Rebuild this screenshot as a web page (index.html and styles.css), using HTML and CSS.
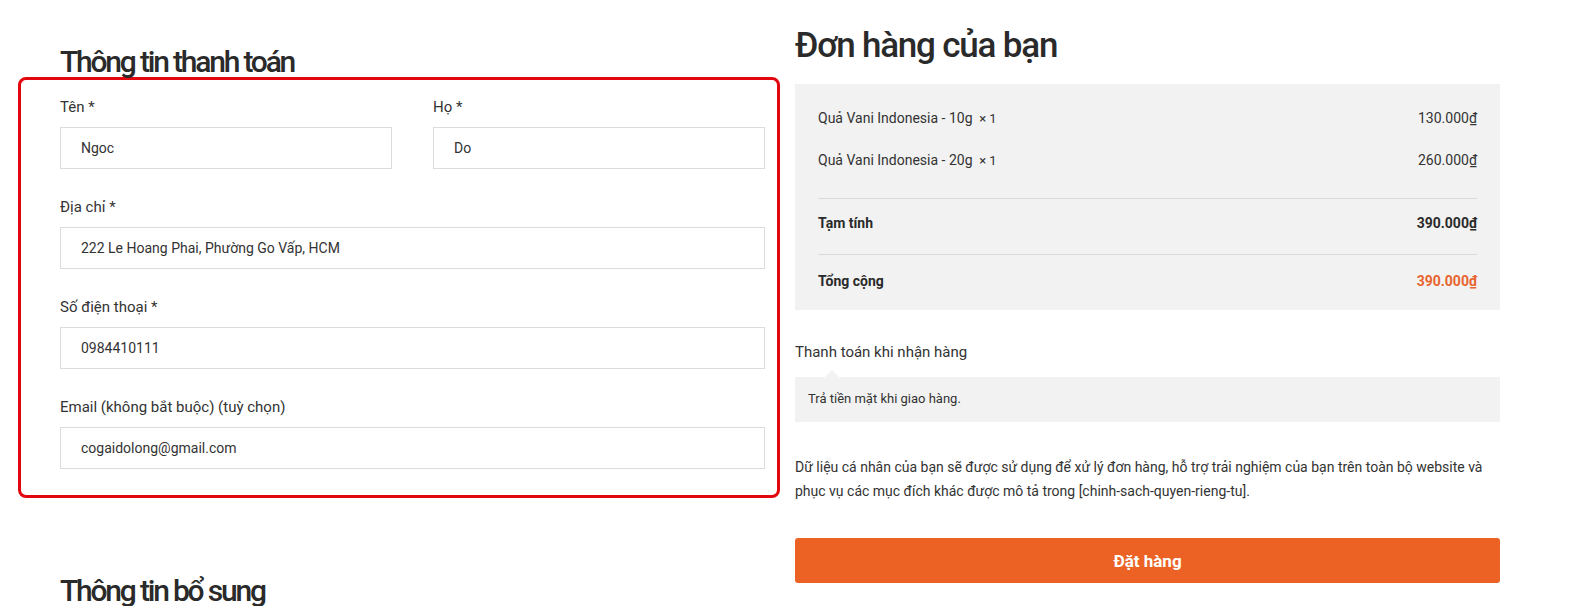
FILE: index.html
```html
<!DOCTYPE html>
<html lang="vi">
<head>
<meta charset="utf-8">
<title>Thanh toán</title>
<link rel="stylesheet" href="styles.css">
</head>
<body>
<div class="checkout">
  <div class="col col-billing">
    <h3 class="heading">Thông tin thanh toán</h3>
    <div class="billing-box">
      <div class="row-2">
        <div class="field">
          <label class="label">Tên *</label>
          <div class="input">Ngoc</div>
        </div>
        <div class="field">
          <label class="label">Họ *</label>
          <div class="input">Do</div>
        </div>
      </div>
      <div class="field">
        <label class="label">Địa chỉ *</label>
        <div class="input">222 Le Hoang Phai, Phường Go Vấp, HCM</div>
      </div>
      <div class="field">
        <label class="label">Số điện thoại *</label>
        <div class="input">0984410111</div>
      </div>
      <div class="field">
        <label class="label">Email (không bắt buộc) (tuỳ chọn)</label>
        <div class="input">cogaidolong@gmail.com</div>
      </div>
    </div>
    <h3 class="heading heading-extra">Thông tin bổ sung</h3>
  </div>
  <div class="col col-order">
    <h3 class="heading heading-order">Đơn hàng của bạn</h3>
    <div class="order-box">
      <div class="items">
        <div class="line"><span>Quả Vani Indonesia - 10g <span class="qty">&nbsp;×&nbsp;1</span></span><span>130.000₫</span></div>
        <div class="line"><span>Quả Vani Indonesia - 20g <span class="qty">&nbsp;×&nbsp;1</span></span><span>260.000₫</span></div>
      </div>
      <div class="line total-row"><span>Tạm tính</span><span>390.000₫</span></div>
      <div class="line total-row total-last"><span>Tổng cộng</span><span class="grand">390.000₫</span></div>
    </div>
    <div class="payment-title">Thanh toán khi nhận hàng</div>
    <div class="payment-box">Trả tiền mặt khi giao hàng.</div>
    <p class="privacy">Dữ liệu cá nhân của bạn sẽ được sử dụng để xử lý đơn hàng, hỗ trợ trải nghiệm của bạn trên toàn bộ website và phục vụ các mục đích khác được mô tả trong [chinh-sach-quyen-rieng-tu].</p>
    <button class="place-order">Đặt hàng</button>
  </div>
</div>
</body>
</html>
```

FILE: styles.css
```css
html, body {
  margin: 0;
  padding: 0;
  background: #ffffff;
}
body {
  font-family: Roboto, "Liberation Sans", sans-serif;
  color: #333333;
  overflow: hidden;
}
.checkout {
  display: flex;
  align-items: flex-start;
  gap: 30px;
  padding-left: 60px;
}
.col {
  width: 705px;
  flex: 0 0 705px;
}
.col-billing {
  padding-top: 47px;
}
.col-order {
  padding-top: 29px;
}
.heading {
  margin: 0;
  font-size: 30px;
  line-height: 30px;
  font-weight: 500;
  letter-spacing: -2.2px;
  color: #2a2a2a;
}
.heading-order {
  font-size: 35px;
  line-height: 34px;
  letter-spacing: -1.2px;
}
.heading-extra {
  margin-top: 78px;
}
.billing-box {
  margin: 0 -15px 0 -42px;
  border: 3px solid #e2060f;
  border-radius: 8px;
  padding: 17px 12px 26px 39px;
}
.row-2 {
  display: flex;
  gap: 41px;
}
.row-2 .field {
  flex: 1 1 0;
}
.field {
  margin-bottom: 28px;
}
.billing-box > .field:last-child {
  margin-bottom: 0;
}
.label {
  display: block;
  font-size: 15px;
  line-height: 20px;
  color: #333;
  margin-bottom: 10px;
}
.input {
  height: 40px;
  border: 1px solid #dcdcdc;
  padding: 0 20px;
  font-size: 14px;
  line-height: 40px;
  color: #333;
  background: #fff;
}
.order-box {
  margin-top: 21px;
  background: #f2f2f2;
  padding: 0 23px;
}
.items {
  padding: 24px 0 27px;
  display: flex;
  flex-direction: column;
  gap: 21px;
}
.line {
  display: flex;
  justify-content: space-between;
  font-size: 14px;
  line-height: 20px;
  color: #333;
}
.qty {
  font-size: 13px;
}
.total-row {
  border-top: 1px solid #dadada;
  padding: 14px 0 21px;
  font-weight: 700;
  color: #2a2a2a;
}
.total-last {
  padding: 16px 0 19px;
}
.grand {
  color: #e8642e;
}
.payment-title {
  margin-top: 32px;
  font-size: 15px;
  line-height: 20px;
  color: #333;
}
.payment-box {
  position: relative;
  margin-top: 15px;
  background: #f2f2f2;
  padding: 12px 13px 14px;
  font-size: 13px;
  line-height: 19px;
  color: #333;
}
.payment-box::before {
  content: "";
  position: absolute;
  left: 30px;
  top: -7px;
  border-left: 7px solid transparent;
  border-right: 7px solid transparent;
  border-bottom: 7px solid #f2f2f2;
}
.privacy {
  margin: 33px 0 0;
  font-size: 14px;
  line-height: 24px;
  color: #333;
}
.place-order {
  display: block;
  width: 100%;
  margin-top: 35px;
  height: 45px;
  border: 0;
  border-radius: 3px;
  background: #ec6225;
  color: #fff;
  font-family: Roboto, "Liberation Sans", sans-serif;
  font-size: 17px;
  font-weight: 700;
  cursor: pointer;
}
```
